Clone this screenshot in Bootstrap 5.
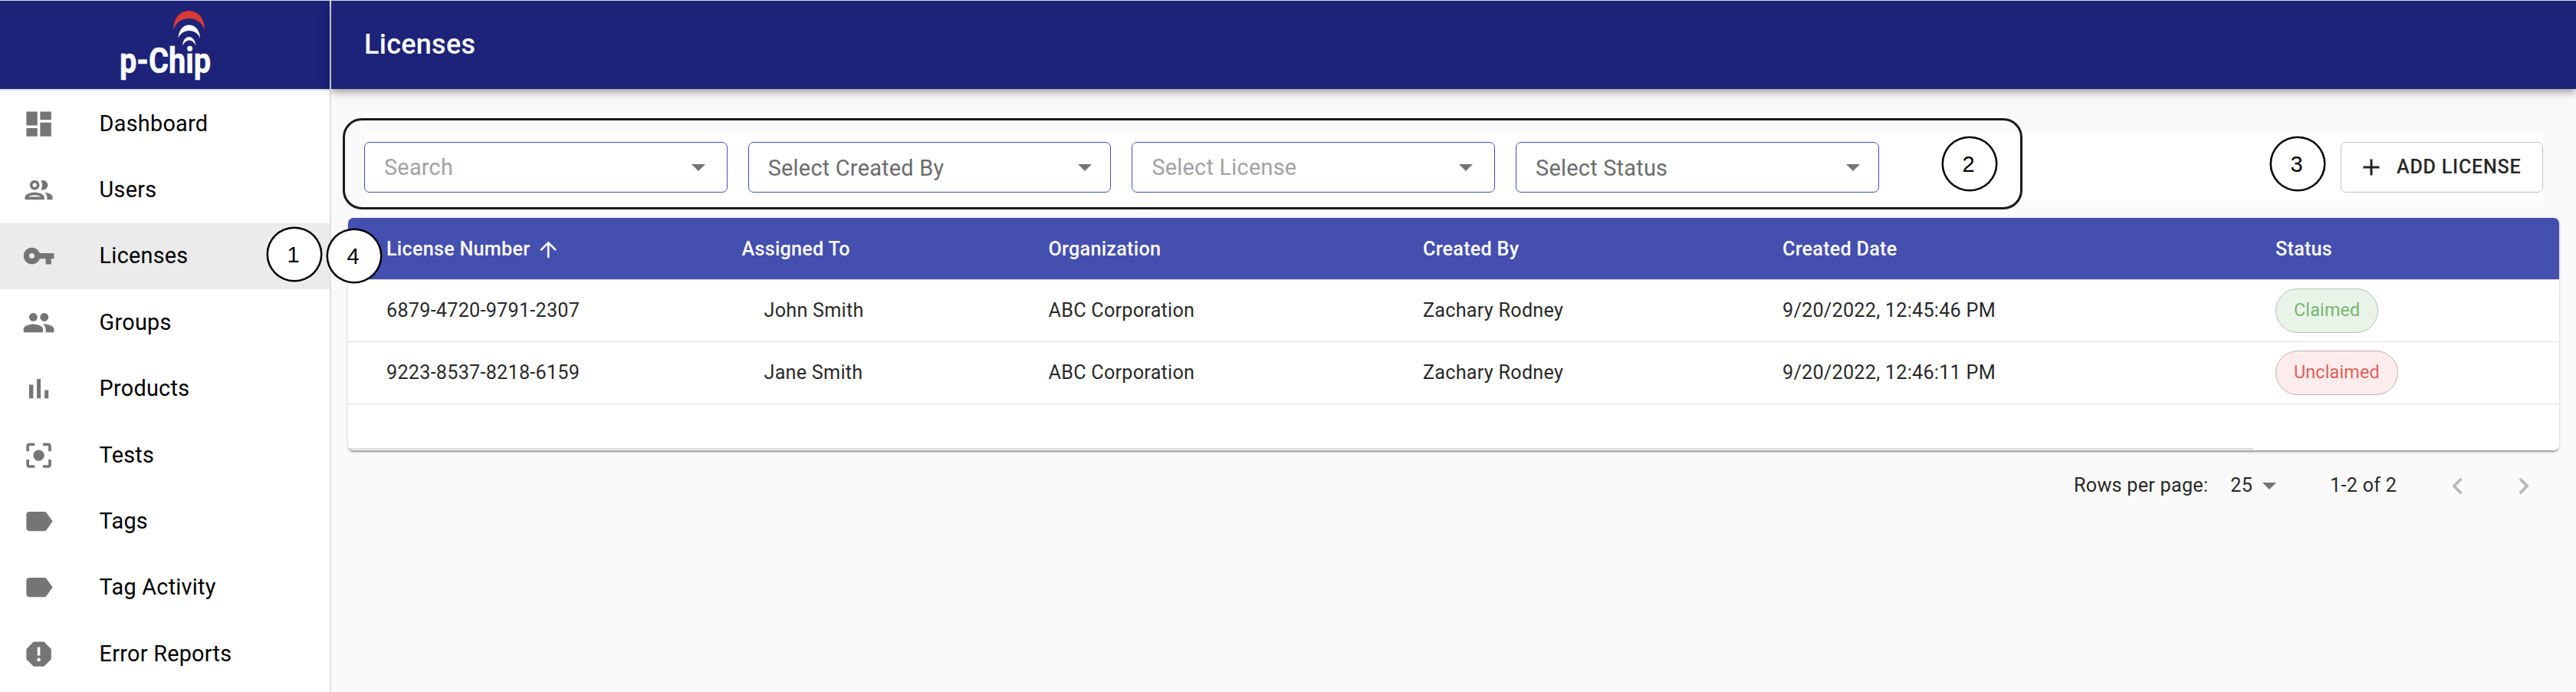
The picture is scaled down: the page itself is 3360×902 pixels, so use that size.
<!DOCTYPE html>
<html lang="en">
<head>
<meta charset="utf-8">
<title>Licenses</title>
<link href="https://cdn.jsdelivr.net/npm/bootstrap@5.3.0/dist/css/bootstrap.min.css" rel="stylesheet">
<style>
body{font-family:Roboto,sans-serif;font-size:25.2px;line-height:1.43;letter-spacing:.01em;color:rgba(0,0,0,.87);background:#fafafa;height:902px;overflow:hidden;border-top:1px solid #d9dce0}
.side{width:432px;background:#fff;border-right:2px solid #e0e0e0;height:901px}
.brand{height:115px;background:#1c2378}
.brand svg{margin-left:150px;display:block;overflow:visible}
.menu{border-top:2px solid #e0e0e0}
.menu a{height:86.4px;padding-left:28.8px;font-size:28.8px;line-height:1.5;letter-spacing:.00938em;color:#000;text-decoration:none}
.menu a.active{background:#ebebeb}
.menu svg{width:43.2px;height:43.2px;fill:#757575;margin-right:57.6px}
.topbar{height:115px;background:#1c2378;color:#fff;font-size:36px;font-weight:500;letter-spacing:.0075em;padding-left:43px;padding-top:1px;box-shadow:0 4px 7px -2px rgba(0,0,0,.2),0 7px 9px rgba(0,0,0,.14),0 2px 18px rgba(0,0,0,.12)}
.filters{margin:58px 43px 0 43px;height:88px;border-radius:7px;background:#fff;gap:27px}
.pick{width:473.7px;height:66px;border:1px solid #3f51b5;border-radius:7px;padding:0 28px 0 25px;font-size:28.8px;letter-spacing:.00938em;line-height:1;color:#6b6b6b}
.pick.hint{color:#a2a2a2}
.pick.sel{padding-right:24px}
.pick.sel span{padding-top:2px}
.caret{width:0;height:0;border:9px solid transparent;border-top-color:#757575;border-bottom:0}
.addbtn{width:264px;height:66px;border:1px solid #c4c4c4;border-radius:7px;font-size:25.2px;font-weight:500;letter-spacing:.02857em;line-height:1;color:rgba(0,0,0,.87);padding:0 0 0 21px}
.addbtn svg{margin-right:15px}
.sheet{margin:22px 22px 0 22px;background:#fff;border-radius:7px;height:303px;overflow:hidden;box-shadow:0 4px 2px -2px rgba(0,0,0,.2),0 2px 2px rgba(0,0,0,.14),0 2px 5px rgba(0,0,0,.12)}
.trow{display:grid;grid-template-columns:463.5px 400px 488.5px 469px 643px 1fr;padding-left:50px;height:81px;border-bottom:1px solid #e0e0e0;align-items:center}
.trow.thead-row{background:#444fb0;color:#fff;font-weight:500;padding-top:2px}
.indent{padding-left:29px}
.pill{height:58px;border:1px solid #b5bdb5;border-radius:29px;font-size:23.4px;padding:0 23px;letter-spacing:.006em}
.ok{background:#e9f4e9;color:#76b56f}
.no{background:#fdecec;color:#dd6058;border-color:#bfb1b3}
.scrollbit{height:2px;width:2485px;background:#dcdcdc;margin-top:57px}
.pager{height:93px;padding-left:2273px}
.gap-a{margin-left:29px}
.gap-b{margin-left:13px}
.gap-c{margin-left:70px}
.gap-d{margin-left:58px}
.gap-e{margin-left:43px}
.mark-no{position:absolute;width:72px;height:71px;border:2px solid #000;box-shadow:0 0 0 .5px #000;border-radius:50%;background:#fff;color:#000;font:29px "Liberation Sans",sans-serif;line-height:1;letter-spacing:0;padding:2px 2px 0 0}
.outline{position:absolute;left:447px;top:153px;width:2191px;height:119px;border:3px solid #1a1a1a;border-radius:25px}
</style>
</head>
<body class="position-relative">
<div class="d-flex">
<aside class="side flex-shrink-0">
  <div class="brand"><svg width="140" height="115" viewBox="150 1 140 115" role="img" aria-label="p-Chip">
    <path fill="#d93a35" d="M226 39C226 5.500 267 5.500 267 39C260 19 233 19 226 39Z"/>
    <path fill="#fff" d="M232.5 50C233 26.500 260 26.500 261 50C256 36.500 237 36.500 232.500 50Z"/>
    <path fill="#fff" d="M238 59.500C239 44 254 44 255.500 59.500C251 50 243 50 238 59.500Z"/>
    <text x="156" y="94.5" textLength="119" lengthAdjust="spacingAndGlyphs" font-family="Roboto" font-weight="700" font-size="47" letter-spacing="0" stroke="#fff" stroke-width=".6" fill="#fff">p-Chip</text></svg></div>
  <nav class="menu d-flex flex-column">
    <a class="d-flex align-items-center" href="#"><svg viewBox="0 0 24 24"><path d="M3 13h8V3H3v10zm0 8h8v-6H3v6zm10 0h8V11h-8v10zm0-18v6h8V3h-8z"/></svg>Dashboard</a>
    <a class="d-flex align-items-center" href="#"><svg viewBox="0 0 24 24"><path d="M9 13.750c-2.340 0-7 1.170-7 3.500V19h14v-1.750c0-2.330-4.660-3.500-7-3.500zM4.340 17c.84-.58 2.870-1.250 4.660-1.250s3.820.67 4.660 1.250H4.340zM9 12c1.930 0 3.500-1.570 3.500-3.500S10.930 5 9 5 5.500 6.570 5.500 8.500 7.070 12 9 12zm0-5c.83 0 1.500.67 1.500 1.500S9.830 10 9 10s-1.500-.67-1.500-1.500S8.170 7 9 7zm7.040 6.810c1.160.84 1.960 1.960 1.960 3.440V19h4v-1.750c0-2.020-3.500-3.170-5.960-3.440zM15 12c1.930 0 3.500-1.570 3.500-3.500S16.930 5 15 5c-.54 0-1.040.13-1.500.35.63.89 1 1.980 1 3.150s-.37 2.260-1 3.150c.46.22.96.35 1.500.35z"/></svg>Users</a>
    <a class="d-flex align-items-center active" href="#"><svg viewBox="0 0 24 24"><path d="M12.650 10C11.830 7.670 9.610 6 7 6c-3.310 0-6 2.690-6 6s2.690 6 6 6c2.610 0 4.830-1.670 5.650-4H17v4h4v-4h2v-4H12.650zM7 14c-1.100 0-2-.9-2-2s.9-2 2-2 2 .9 2 2-.9 2-2 2z"/></svg>Licenses</a>
    <a class="d-flex align-items-center" href="#"><svg viewBox="0 0 24 24"><path d="M16 11c1.660 0 2.990-1.340 2.990-3S17.660 5 16 5c-1.660 0-3 1.340-3 3s1.340 3 3 3zm-8 0c1.660 0 2.990-1.340 2.990-3S9.660 5 8 5C6.340 5 5 6.340 5 8s1.340 3 3 3zm0 2c-2.330 0-7 1.170-7 3.500V19h14v-2.500c0-2.330-4.670-3.500-7-3.500zm8 0c-.29 0-.62.02-.97.05 1.160.84 1.970 1.970 1.970 3.450V19h6v-2.500c0-2.330-4.670-3.500-7-3.500z"/></svg>Groups</a>
    <a class="d-flex align-items-center" href="#"><svg viewBox="0 0 24 24"><path d="M5 9.200h3V19H5zM10.600 5h2.800v14h-2.800zm5.600 8H19v6h-2.800z"/></svg>Products</a>
    <a class="d-flex align-items-center" href="#"><svg viewBox="0 0 24 24"><path d="M5 15H3v4c0 1.100.9 2 2 2h4v-2H5v-4zM5 5h4V3H5c-1.100 0-2 .9-2 2v4h2V5zm14-2h-4v2h4v4h2V5c0-1.100-.9-2-2-2zm0 16h-4v2h4c1.100 0 2-.9 2-2v-4h-2v4zM12 8c-2.210 0-4 1.790-4 4s1.790 4 4 4 4-1.790 4-4-1.790-4-4-4z"/></svg>Tests</a>
    <a class="d-flex align-items-center" href="#"><svg viewBox="0 0 24 24"><path d="M17.630 5.840C17.270 5.330 16.670 5 16 5L5 5.010C3.900 5.010 3 5.900 3 7v10c0 1.100.9 1.990 2 1.990L16 19c.67 0 1.270-.33 1.630-.84L22 12l-4.370-6.160z"/></svg>Tags</a>
    <a class="d-flex align-items-center" href="#"><svg viewBox="0 0 24 24"><path d="M17.630 5.840C17.270 5.330 16.670 5 16 5L5 5.010C3.900 5.010 3 5.900 3 7v10c0 1.100.9 1.990 2 1.990L16 19c.67 0 1.270-.33 1.630-.84L22 12l-4.370-6.160z"/></svg>Tag Activity</a>
    <a class="d-flex align-items-center" href="#"><svg viewBox="0 0 24 24"><path d="M15.730 3H8.270L3 8.270v7.460L8.270 21h7.460L21 15.730V8.270L15.730 3zM12 17.300c-.72 0-1.300-.58-1.300-1.300 0-.72.58-1.300 1.300-1.300.72 0 1.300.58 1.300 1.300 0 .72-.58 1.300-1.300 1.300zm1-4.300h-2V7h2v6z"/></svg>Error Reports</a>
  </nav>
</aside>
<main class="flex-grow-1">
  <header class="topbar d-flex align-items-center">Licenses</header>
  <section class="filters d-flex align-items-center">
    <div class="pick hint d-flex align-items-center justify-content-between"><span>Search</span><i class="caret"></i></div>
    <div class="pick sel d-flex align-items-center justify-content-between"><span>Select Created By</span><i class="caret"></i></div>
    <div class="pick hint d-flex align-items-center justify-content-between"><span>Select License</span><i class="caret"></i></div>
    <div class="pick sel d-flex align-items-center justify-content-between"><span>Select Status</span><i class="caret"></i></div>
    <button class="addbtn bg-white d-flex align-items-center ms-auto"><svg width="36" height="36" viewBox="0 0 24 24" fill="#222"><path d="M19 13h-6v6h-2v-6H5v-2h6V5h2v6h6v2z"/></svg>ADD LICENSE</button>
  </section>
  <section class="sheet">
    <div class="trow thead-row"><div class="d-flex align-items-center">License Number<svg class="ms-2" width="32.4" height="32.4" viewBox="0 0 24 24" fill="#fff"><path d="M4 12l1.410 1.410L11 7.830V20h2V7.830l5.580 5.590L20 12l-8-8-8 8z"/></svg></div><div>Assigned To</div><div>Organization</div><div>Created By</div><div>Created Date</div><div>Status</div></div>
    <div class="trow"><div>6879-4720-9791-2307</div><div class="indent">John Smith</div><div>ABC Corporation</div><div>Zachary Rodney</div><div>9/20/2022, 12:45:46 PM</div><div class="d-flex"><span class="pill ok d-flex align-items-center">Claimed</span></div></div>
    <div class="trow"><div>9223-8537-8218-6159</div><div class="indent">Jane Smith</div><div>ABC Corporation</div><div>Zachary Rodney</div><div>9/20/2022, 12:46:11 PM</div><div class="d-flex"><span class="pill no d-flex align-items-center">Unclaimed</span></div></div>
    <div class="scrollbit"></div>
  </section>
  <footer class="pager d-flex align-items-center"><span>Rows per page:</span><span class="gap-a">25</span><i class="caret gap-b"></i><span class="gap-c">1-2 of 2</span>
    <svg class="gap-d" width="43.2" height="43.2" viewBox="0 0 24 24" fill="#b8b8b8"><path d="M15.410 7.410L14 6l-6 6 6 6 1.410-1.410L10.830 12z"/></svg>
    <svg class="gap-e" width="43.2" height="43.2" viewBox="0 0 24 24" fill="#b8b8b8"><path d="M10 6L8.590 7.410 13.170 12l-4.580 4.590L10 18l6-6z"/></svg></footer>
</main>
</div>
<div class="outline"></div>
<div class="mark-no d-flex align-items-center justify-content-center" style="left:347.500px;top:295px">1</div>
<div class="mark-no d-flex align-items-center justify-content-center" style="left:425.500px;top:296.500px">4</div>
<div class="mark-no d-flex align-items-center justify-content-center" style="left:2532.500px;top:177px">2</div>
<div class="mark-no d-flex align-items-center justify-content-center" style="left:2960.500px;top:177px">3</div>
<script src="https://cdn.jsdelivr.net/npm/bootstrap@5.3.0/dist/js/bootstrap.bundle.min.js"></script>
</body>
</html>
